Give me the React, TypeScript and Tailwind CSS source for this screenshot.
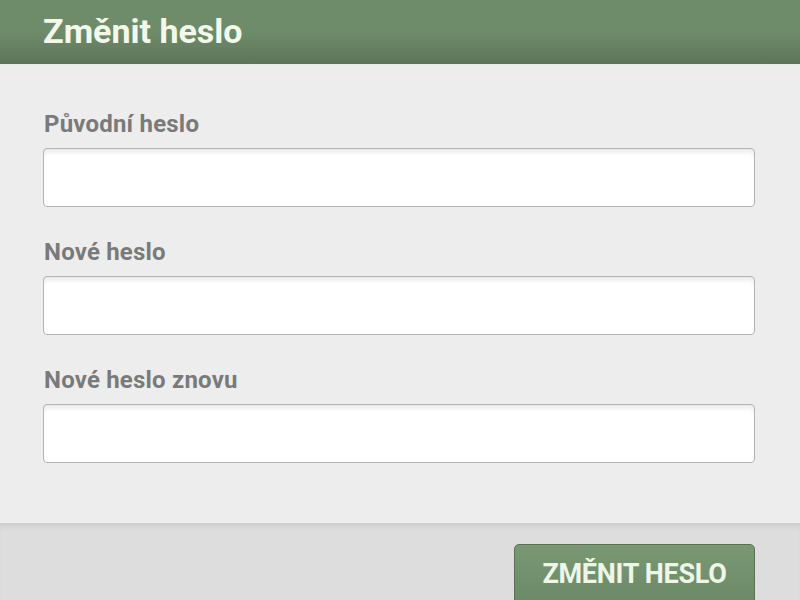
import React from "react";

const fields = ["Původní heslo", "Nové heslo", "Nové heslo znovu"];

export default function App() {
  return (
    <div className="w-[800px] h-[600px] overflow-hidden flex flex-col bg-[#eeeded] font-['Roboto','Liberation_Sans',sans-serif]">
      {/* Header */}
      <div className="h-[65px] shrink-0 flex items-center px-[43px] bg-gradient-to-b from-[#6f8c6a] via-[#6f8c6a] to-[#5d7458] border-b border-[#e6ede3]">
        <h1 className="text-[34px] font-bold text-[#f2f8ec] tracking-[0px] leading-none -mt-[3px]">
          Změnit heslo
        </h1>
      </div>

      {/* Body */}
      <div className="flex-1 flex flex-col px-[43px] pt-[47px] gap-[33px]">
        {fields.map((label) => (
          <div key={label} className="flex flex-col">
            <label className="text-[24px] font-bold text-[#7a7a7a] leading-none ml-[1px] mb-[12px] tracking-[0.2px]">
              {label}
            </label>
            <input
              type="password"
              className="h-[59px] w-[712px] rounded-[4px] border border-[#b3b3b3] bg-white shadow-[inset_0_6px_6px_-4px_rgba(0,0,0,0.12)] outline-none"
            />
          </div>
        ))}
      </div>

      {/* Footer */}
      <div className="h-[77px] shrink-0 flex justify-end items-start px-[45px] pt-[21px] bg-[#dddddd] shadow-[inset_0_6px_6px_-3px_rgba(0,0,0,0.08)]">
        <button className="w-[241px] h-[70px] rounded-[5px] border border-[#5a7053] bg-gradient-to-b from-[#7b9875] to-[#6a8765] flex justify-center pt-[16px]">
          <span className="text-[27px] font-bold text-[#eef6e8] leading-none tracking-[-0.3px]">
            ZMĚNIT HESLO
          </span>
        </button>
      </div>
    </div>
  );
}
